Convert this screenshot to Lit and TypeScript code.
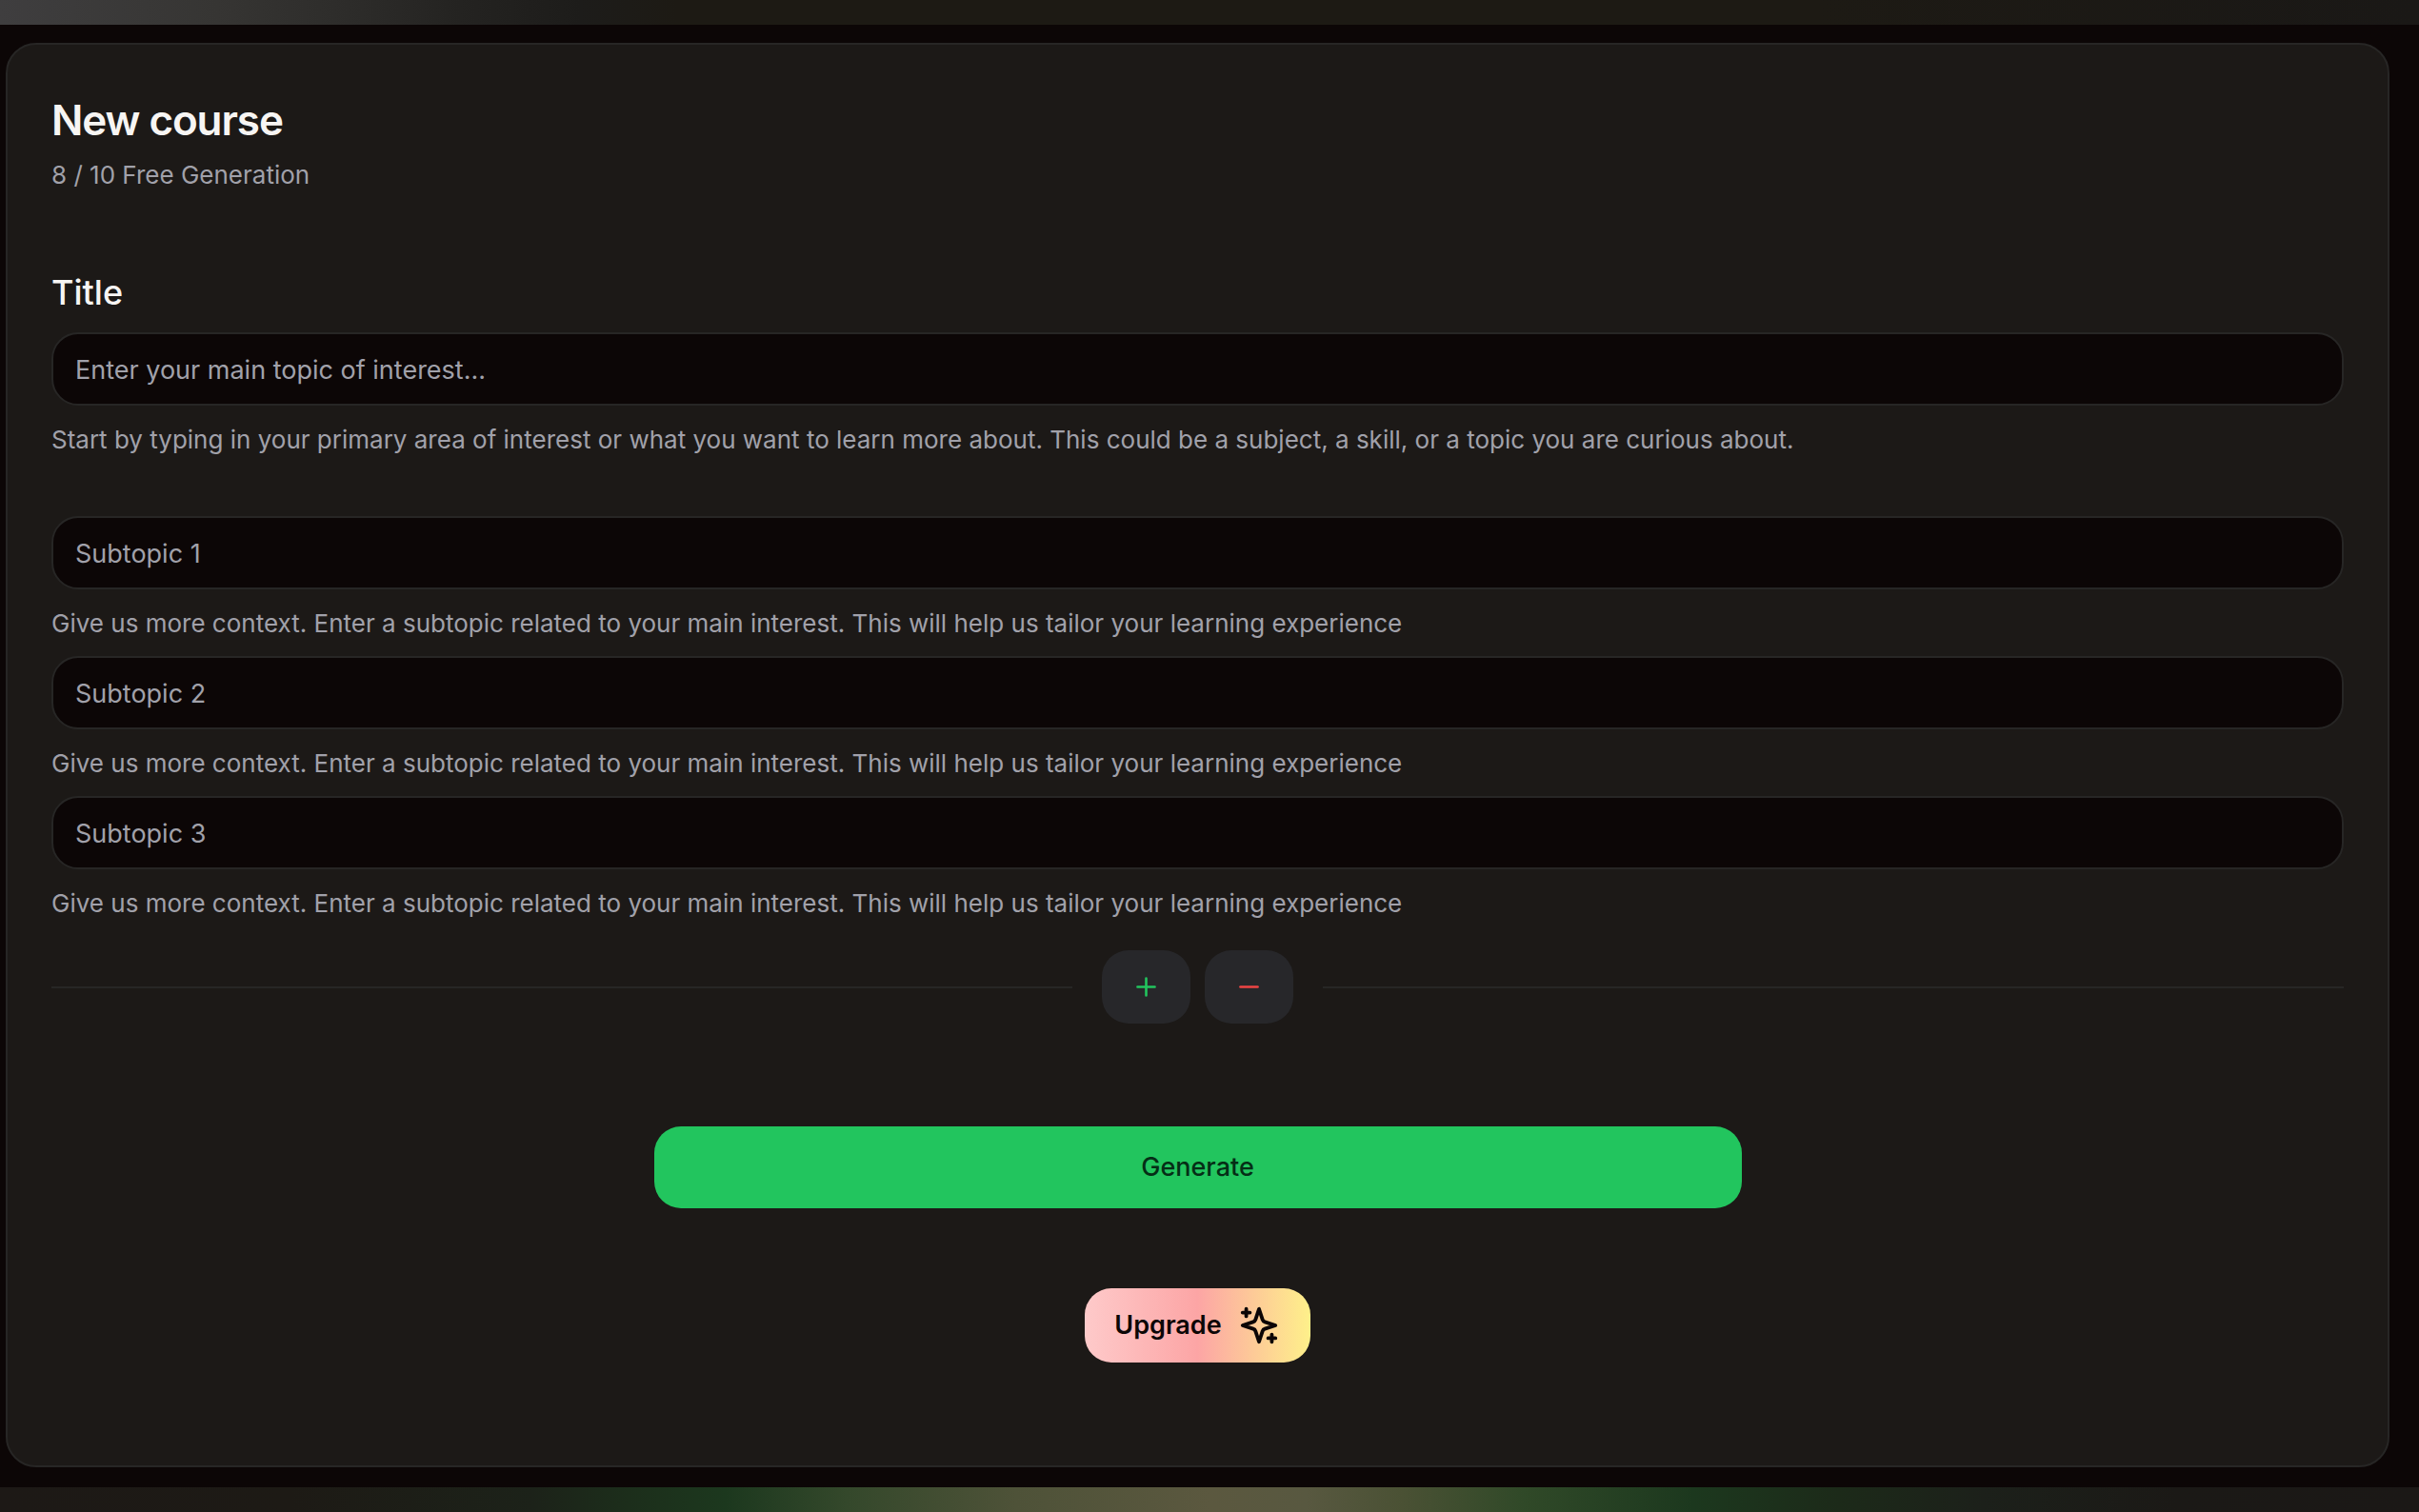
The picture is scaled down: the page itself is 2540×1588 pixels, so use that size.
import { LitElement, html, css, svg } from "lit";
import { customElement, state } from "lit/decorators.js";

const plusIcon = svg`<path d="M5 12h14M12 5v14" />`;
const minusIcon = svg`<path d="M5 12h14" />`;
const sparklesIcon = svg`
  <path d="m12 3-1.912 5.813a2 2 0 0 1-1.275 1.275L3 12l5.813 1.912a2 2 0 0 1 1.275 1.275L12 21l1.912-5.813a2 2 0 0 1 1.275-1.275L21 12l-5.813-1.912a2 2 0 0 1-1.275-1.275L12 3Z" />
  <path d="M5 3v4M3 5h4M19 17v4M17 19h4" />`;

@customElement("app-root")
export class AppRoot extends LitElement {
  @state() private subtopics = 3;

  static styles = css`
    :host {
      display: block;
      font-family: Inter, "Liberation Sans", sans-serif;
      font-size: 27px;
      line-height: 40px;
      color: #f7f5f3;
    }
    * {
      box-sizing: border-box;
      margin: 0;
    }
    .page {
      min-height: 100vh;
      display: grid;
      grid-template-rows: 26px 1fr 26px;
    }
    .glow-top {
      background: linear-gradient(90deg, #3f3e3f 0%, #363533 9%, #2c2b29 15%, #242321 19%, #1d1c1a 24%, #1d1a14 28%, #1d1a14 75%, #1a1816 100%);
    }
    .glow-bottom {
      background: linear-gradient(90deg, #1d1916 0%, #1d1a15 12%, #1c2219 22%, #1c2e1b 26%, #1c381e 30%, #34482b 35%, #4e5238 42%, #5b583f 50%, #585840 54%, #4a5134 58%, #304928 63%, #1c381e 70%, #1c2a19 76%, #1c201a 82%, #1b1916 90%, #1b1816 100%);
    }
    .panel {
      display: grid;
      padding: 19px 31px 21px 6px;
      background: #0c0606;
    }
    .card {
      padding: 51px 46px;
      background: #1c1917;
      border: 2px solid #272625;
      border-radius: 32px;
    }
    h1 {
      font-size: 44px;
      line-height: 56px;
      font-weight: 600;
      letter-spacing: -0.025em;
    }
    .quota {
      margin-top: 10px;
      font-size: 26px;
      color: #a1a1aa;
    }
    .fields {
      display: grid;
      gap: 14px;
      margin-top: 83px;
    }
    .main-field {
      display: grid;
      margin-bottom: 46px;
    }
    .title {
      margin-bottom: 22px;
      font-size: 36px;
      font-weight: 500;
    }
    .sub-field {
      display: grid;
    }
    .help {
      margin-top: 16px;
      font-size: 26px;
      color: #a1a1aa;
    }
    input {
      width: 100%;
      height: 77px;
      padding: 2px 23px 0;
      font: inherit;
      color: inherit;
      background: #0c0606;
      border: 2px solid #272625;
      border-radius: 28px;
    }
    input::placeholder {
      color: #a1a1aa;
      opacity: 1;
    }
    button {
      display: flex;
      align-items: center;
      justify-content: center;
      border: 0;
      border-radius: 28px;
      font: inherit;
      cursor: pointer;
    }
    svg {
      fill: none;
      stroke: currentColor;
      stroke-width: 2;
      stroke-linecap: round;
      stroke-linejoin: round;
    }
    .adjust {
      display: flex;
      align-items: center;
      gap: 15px;
      margin-top: 29px;
    }
    .rule {
      flex: 1;
      height: 2px;
      margin: 0 16px 0 0;
      border: 0;
      background: #272625;
    }
    .rule:last-child {
      margin: 0 0 0 16px;
    }
    .step {
      width: 93px;
      height: 77px;
      background: #27272a;
    }
    .step svg {
      width: 31px;
      height: 31px;
    }
    .add {
      color: #22c55e;
    }
    .remove {
      color: #ef4444;
    }
    .actions {
      display: flex;
      flex-direction: column;
      align-items: center;
      gap: 84px;
      margin-top: 108px;
    }
    .generate {
      width: 100%;
      max-width: 1142px;
      height: 86px;
      font-weight: 500;
      color: #052e16;
      background: #22c55e;
    }
    .upgrade {
      height: 78px;
      gap: 16px;
      padding: 0 31px;
      font-weight: 600;
      color: #0c0606;
      background: linear-gradient(90deg, #fecaca, #fca5a5, #fef08a);
    }
    .upgrade svg {
      width: 46px;
      height: 46px;
    }
  `;

  render() {
    const topics = Array.from({ length: this.subtopics }, (_, i) => i + 1);
    return html`
      <div class="page">
        <div class="glow-top"></div>
        <main class="panel">
          <section class="card">
            <header>
              <h1>New course</h1>
              <p class="quota">8 / 10 Free Generation</p>
            </header>
            <form @submit=${(e: Event) => e.preventDefault()}>
              <div class="fields">
                <div class="main-field">
                  <label class="title" for="title">Title</label>
                  <input id="title" type="text" placeholder="Enter your main topic of interest..." aria-describedby="title-help" />
                  <p class="help" id="title-help">Start by typing in your primary area of interest or what you want to learn more about. This could be a subject, a skill, or a topic you are curious about.</p>
                </div>
                ${topics.map(
                  (n) => html`
                    <div class="sub-field">
                      <input type="text" aria-label="Subtopic ${n}" placeholder="Subtopic ${n}" aria-describedby="help-${n}" />
                      <p class="help" id="help-${n}">Give us more context. Enter a subtopic related to your main interest. This will help us tailor your learning experience</p>
                    </div>
                  `,
                )}
              </div>
              <div class="adjust">
                <hr class="rule" />
                <button class="step add" type="button" aria-label="Add subtopic" @click=${() => this.subtopics++}>
                  <svg viewBox="0 0 24 24" aria-hidden="true">${plusIcon}</svg>
                </button>
                <button class="step remove" type="button" aria-label="Remove subtopic" @click=${() => (this.subtopics = Math.max(1, this.subtopics - 1))}>
                  <svg viewBox="0 0 24 24" aria-hidden="true">${minusIcon}</svg>
                </button>
                <hr class="rule" />
              </div>
              <div class="actions">
                <button class="generate" type="submit">Generate</button>
                <button class="upgrade" type="button">
                  Upgrade
                  <svg viewBox="0 0 24 24" aria-hidden="true">${sparklesIcon}</svg>
                </button>
              </div>
            </form>
          </section>
        </main>
        <div class="glow-bottom"></div>
      </div>
    `;
  }
}
